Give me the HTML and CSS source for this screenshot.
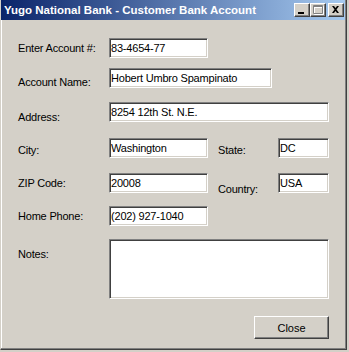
FILE: index.html
```html
<!DOCTYPE html>
<html lang="en">

<head>
    <meta charset="UTF-8">
    <title>Yugo National Bank - Customer Bank Account</title>
    <link rel="stylesheet" href="styles.css">
</head>

<body>
    <div class="window">
        <div class="titlebar">
            <span class="title">Yugo National Bank - Customer Bank Account</span>
            <div class="caption-buttons">
                <span class="caption-btn">
                    <svg width="14" height="12" viewBox="0 0 14 12"><rect x="3" y="8" width="6" height="2" fill="#000"/></svg>
                </span>
                <span class="caption-btn">
                    <svg width="14" height="12" viewBox="0 0 14 12">
                        <path d="M3.5 2.5h9v8h-9z M4 3.5h8" fill="none" stroke="#fff"/>
                        <path d="M2.5 1.5h9v8h-9z M3 2.5h8" fill="none" stroke="#808080"/>
                    </svg>
                </span>
                <span class="caption-btn caption-close">
                    <svg width="14" height="12" viewBox="0 0 14 12"><path d="M3 2l2 0 1.5 2 1.5-2 2 0-2.5 3.5 2.5 3.5-2 0-1.5-2-1.5 2-2 0 2.5-3.5z" fill="#000"/></svg>
                </span>
            </div>
        </div>

        <form class="client" onsubmit="event.preventDefault();">
            <div class="row row-account">
                <label class="field-label" for="AccountNumber">Enter Account #:</label>
                <input class="field field-short" type="text" id="AccountNumber" value="83-4654-77">
            </div>

            <div class="row row-name">
                <label class="field-label drop-8" for="AccountName">Account Name:</label>
                <input class="field field-name" type="text" id="AccountName" value="Hobert Umbro Spampinato">
            </div>

            <div class="row row-address">
                <label class="field-label drop-9" for="Address">Address:</label>
                <input class="field field-long" type="text" id="Address" value="8254 12th St. N.E.">
            </div>

            <div class="row row-city">
                <label class="field-label drop-6" for="City">City:</label>
                <input class="field field-short" type="text" id="City" value="Washington">
                <label class="side-label drop-6" for="State">State:</label>
                <input class="field field-tiny" type="text" id="State" value="DC">
            </div>

            <div class="row row-zip">
                <label class="field-label" for="ZipCode">ZIP Code:</label>
                <input class="field field-short" type="text" id="ZipCode" value="20008">
                <label class="side-label drop-10" for="Country">Country:</label>
                <input class="field field-tiny" type="text" id="Country" value="USA">
            </div>

            <div class="row row-phone">
                <label class="field-label" for="HomePhone">Home Phone:</label>
                <input class="field field-short" type="text" id="HomePhone" value="(202) 927-1040">
            </div>

            <div class="row row-notes">
                <label class="field-label drop-9" for="Notes">Notes:</label>
                <textarea class="field field-notes" id="Notes"></textarea>
            </div>

            <div class="actions">
                <button type="button" class="push-btn">Close</button>
            </div>
        </form>
    </div>
</body>

</html>
```

FILE: styles.css
```css
body {
    margin: 0;
    background-color: #d4d0c8; /* classic dialog grey */
    font-family: 'Liberation Sans', Arial, sans-serif;
    font-size: 11px;
    color: #000;
}

.window {
    width: 347px;
    height: 350px;
    box-sizing: border-box;
    background-color: #d4d0c8;
    border-left: 1px solid #d4d0c8;
    border-right: 1px solid #404040;
    border-bottom: 1px solid #404040;
    box-shadow: inset -1px -1px #808080, inset 1px 0 #fff;
}

/* Title bar */
.titlebar {
    height: 20px;
    margin-right: 1px;
    padding: 0 1px 0 3px;
    box-sizing: border-box;
    display: flex;
    align-items: center;
    justify-content: space-between;
    background: linear-gradient(to right, #0a246a, #a6caf0);
}

.title {
    color: #fff;
    font-size: 11.5px;
    font-weight: bold;
    line-height: 13px;
}

.caption-buttons {
    display: flex;
    gap: 0;
}

.caption-btn {
    width: 16px;
    height: 14px;
    box-sizing: border-box;
    background-color: #d4d0c8;
    border: 1px solid;
    border-color: #fff #404040 #404040 #fff;
    box-shadow: inset -1px -1px #808080;
    display: flex;
}

.caption-close {
    margin-left: 2px;
}

/* Form area */
.client {
    margin: 0;
    padding: 18px 17px 0 17px;
    letter-spacing: -0.2px;
}

.row {
    display: flex;
    align-items: flex-start;
    height: 20px;
}

.row-name { margin-top: 10px; }
.row-address { margin-top: 14px; }
.row-city { margin-top: 16px; }
.row-zip { margin-top: 15px; }
.row-phone { margin-top: 13px; }
.row-notes { margin-top: 13px; height: 60px; }

.field-label {
    width: 91px;
    line-height: 13px;
    padding-top: 4px;
}

.side-label {
    width: 60px;
    margin-left: 10px;
    line-height: 13px;
}

.drop-6 { padding-top: 6px; }
.drop-8 { padding-top: 8px; }
.drop-9 { padding-top: 9px; }
.drop-10 { padding-top: 10px; }

.field {
    height: 20px;
    box-sizing: border-box;
    margin: 0;
    padding: 0 1px;
    font-family: inherit;
    font-size: 11px;
    letter-spacing: -0.2px;
    color: #000;
    background-color: #fff;
    border: 1px solid;
    border-color: #808080 #fff #fff #808080;
    box-shadow: inset 1px 1px #404040, inset -1px -1px #d4d0c8;
    outline: none;
}

.field-short { width: 99px; }
.field-name { width: 163px; }
.field-long { width: 220px; }
.field-tiny { width: 51px; }

.field-notes {
    width: 220px;
    height: 60px;
    resize: none;
    overflow: hidden;
}

.actions {
    display: flex;
    justify-content: flex-end;
    margin-top: 17px;
}

.push-btn {
    width: 75px;
    height: 23px;
    padding: 0;
    font-family: inherit;
    font-size: 11px;
    color: #000;
    background-color: #d4d0c8;
    border: 1px solid;
    border-color: #fff #404040 #404040 #fff;
    box-shadow: inset -1px -1px #808080;
    cursor: pointer;
}
```
